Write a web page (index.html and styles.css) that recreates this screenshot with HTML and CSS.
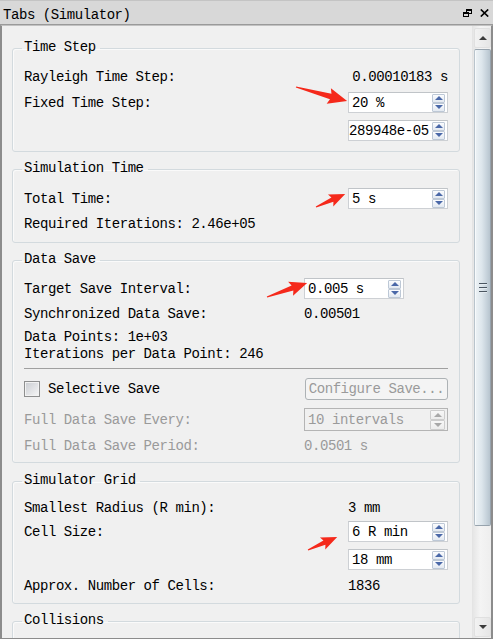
FILE: index.html
```html
<!DOCTYPE html>
<html>
<head>
<meta charset="utf-8">
<link rel="stylesheet" href="styles.css">
</head>
<body>
<div class="window">
  <div class="titlebar">
    <span class="title">Tabs (Simulator)</span>
    <div class="tb-icons">
      <svg class="tb-icon" width="9" height="8" viewBox="0 0 9 8">
        <rect x="3" y="0" width="6" height="2" fill="#000"/>
        <rect x="8" y="0" width="1" height="5" fill="#000"/>
        <rect x="6" y="4" width="3" height="1" fill="#000"/>
        <rect x="3" y="0" width="1" height="3" fill="#000"/>
        <rect x="0" y="3" width="6" height="2" fill="#000"/>
        <rect x="0" y="3" width="1" height="5" fill="#000"/>
        <rect x="5" y="3" width="1" height="5" fill="#000"/>
        <rect x="0" y="7" width="6" height="1" fill="#000"/>
      </svg>
      <svg class="tb-icon" width="9" height="8" viewBox="0 0 9 8">
        <path d="M0.8 0.5 L8.2 7.5 M8.2 0.5 L0.8 7.5" stroke="#000" stroke-width="1.7"/>
      </svg>
    </div>
  </div>
  <div class="body">
    <div class="scroll">
      <fieldset class="group g1">
        <legend>Time Step</legend>
        <div class="row r-text21">
          <span>Rayleigh Time Step:</span>
          <span class="val-right">0.00010183 s</span>
        </div>
        <div class="row mt5">
          <span>Fixed Time Step:</span>
          <div class="spin"><span class="spin-text">20 %</span><span class="spin-btns"><span class="spin-btn up"></span><span class="spin-btn down"></span></span></div>
        </div>
        <div class="row mt7">
          <span></span>
          <div class="spin"><span class="spin-text tight">289948e-05</span><span class="spin-btns"><span class="spin-btn up"></span><span class="spin-btn down"></span></span></div>
        </div>
      </fieldset>

      <fieldset class="group g2">
        <legend>Simulation Time</legend>
        <div class="row">
          <span>Total Time:</span>
          <div class="spin"><span class="spin-text">5 s</span><span class="spin-btns"><span class="spin-btn up"></span><span class="spin-btn down"></span></span></div>
        </div>
        <div class="line mt7">Required Iterations: 2.46e+05</div>
      </fieldset>

      <fieldset class="group g3">
        <legend>Data Save</legend>
        <div class="row wide">
          <span>Target Save Interval:</span>
          <div class="spin spin-short"><span class="spin-text">0.005 s</span><span class="spin-btns"><span class="spin-btn up"></span><span class="spin-btn down"></span></span></div>
        </div>
        <div class="row wide line mt7">
          <span>Synchronized Data Save:</span>
          <span>0.00501</span>
        </div>
        <div class="lines mt7">Data Points: 1e+03<br>Iterations per Data Point: 246</div>
        <div class="separator"></div>
        <div class="row wide r22">
          <label class="check"><span class="checkbox"></span><span>Selective Save</span></label>
          <span class="button disabled">Configure Save...</span>
        </div>
        <div class="row wide r23 mt8 disabled-text">
          <span>Full Data Save Every:</span>
          <div class="spin spin-disabled"><span class="spin-text">10 intervals</span><span class="spin-btns"><span class="spin-btn up"></span><span class="spin-btn down"></span></span></div>
        </div>
        <div class="row wide line mt7 disabled-text">
          <span>Full Data Save Period:</span>
          <span>0.0501 s</span>
        </div>
      </fieldset>

      <fieldset class="group g4">
        <legend>Simulator Grid</legend>
        <div class="row line">
          <span>Smallest Radius (R min):</span>
          <span>3 mm</span>
        </div>
        <div class="row mt5">
          <span>Cell Size:</span>
          <div class="spin"><span class="spin-text">6 R min</span><span class="spin-btns"><span class="spin-btn up"></span><span class="spin-btn down"></span></span></div>
        </div>
        <div class="row mt7">
          <span></span>
          <div class="spin"><span class="spin-text">18 mm</span><span class="spin-btns"><span class="spin-btn up"></span><span class="spin-btn down"></span></span></div>
        </div>
        <div class="row line mt8">
          <span>Approx. Number of Cells:</span>
          <span>1836</span>
        </div>
      </fieldset>

      <fieldset class="group g5">
        <legend>Collisions</legend>
        <div class="filler"></div>
      </fieldset>
    </div>
    <div class="scrollbar">
      <div class="sb-btn"><span class="sb-arrow up"></span></div>
      <div class="sb-thumb"><span class="grip"></span><span class="grip"></span><span class="grip"></span></div>
      <div class="sb-track"></div>
      <div class="sb-btn"><span class="sb-arrow down"></span></div>
    </div>
  </div>
  <svg class="annotations" width="493" height="639" viewBox="0 0 493 639">
    <g fill="#f5291b">
      <polygon transform="translate(296 87) rotate(15.35)" points="0,-0.6 36,-2.8 34,-8 53,0 34,8 36,2.8 0,0.6"/>
      <polygon transform="translate(316 207) rotate(-24.1)" points="0,-0.6 18,-2.4 16,-6.5 32,0 16,6.5 18,2.4 0,0.6"/>
      <polygon transform="translate(267 297) rotate(-19.3)" points="0,-0.6 27,-2.6 25,-7.5 42.5,0 25,7.5 27,2.6 0,0.6"/>
      <polygon transform="translate(308 550) rotate(-24.1)" points="0,-0.6 18,-2.4 16,-6.5 32,0 16,6.5 18,2.4 0,0.6"/>
    </g>
  </svg>
</div>
</body>
</html>
```

FILE: styles.css
```css
* { box-sizing: border-box; }

html, body {
  margin: 0;
  padding: 0;
  background: #f0f0f0;
}

body {
  font-family: "Liberation Mono", "DejaVu Sans Mono", monospace;
  font-size: 14px;
  letter-spacing: -0.43px;
  color: #000;
}

.window {
  position: relative;
  width: 493px;
  height: 639px;
  display: flex;
  flex-direction: column;
  background: #f0f0f0;
  overflow: hidden;
}

.titlebar {
  height: 25px;
  display: flex;
  align-items: center;
  padding: 4px 4px 0 3px;
  background: #d8d8d8;
  border-top: 1px solid #c4c4c4;
  border-bottom: 1px solid #9a9a9a;
  flex: none;
}

.title {
  white-space: nowrap;
}

.tb-icons {
  margin-left: auto;
  display: flex;
  gap: 8px;
  align-items: center;
  margin-top: -3px;
}

.tb-icon {
  display: block;
}

.body {
  flex: 1;
  display: flex;
  min-height: 0;
  border-left: 2px solid #8c8c8c;
  border-right: 2px solid #8c8c8c;
  border-bottom: 1px solid #8c8c8c;
  border-top: 1px solid #c2c2c2;
}

.scroll {
  flex: 1;
  min-width: 0;
  overflow: hidden;
  padding: 14px 12px 0 10px;
}

.group {
  margin: 0;
  min-width: 0;
  border: 1px solid #d3dade;
  border-radius: 3px;
  padding: 0 11px;
  box-shadow: inset 1px 1px 0 #fafafa;
}

.group legend {
  line-height: 14px;
  padding: 0 4px 3px 2px;
  margin-left: -2px;
  white-space: nowrap;
}

.g1 { padding-top: 9px; padding-bottom: 10px; }
.g2 { margin-top: 9px; padding-top: 10px; padding-bottom: 10px; }
.g3 { margin-top: 9px; padding-top: 9px; padding-bottom: 8px; }
.g4 { margin-top: 10px; padding-top: 10px; padding-bottom: 9px; }
.g5 { margin-top: 9px; }

.filler { height: 40px; }

.row {
  display: grid;
  grid-template-columns: 1fr 100px;
  align-items: center;
  height: 21px;
  white-space: nowrap;
}

.row.wide { grid-template-columns: 1fr 144px; }

.r-text21 { height: 21px; }
.r22 { height: 22px; }
.r23 { height: 23px; }

.line { height: 16px; line-height: 16px; }
.lines { line-height: 17px; white-space: nowrap; }

.mt5 { margin-top: 5px; }
.mt7 { margin-top: 7px; }
.mt8 { margin-top: 8px; }

.val-right { text-align: right; }

.spin {
  display: flex;
  align-items: center;
  height: 21px;
  border: 1px solid #cdd0d4;
  border-top-color: #c0c4c8;
  background: #fff;
  padding-right: 2px;
}

.spin-short { width: 100px; }

.r23 .spin { height: 23px; }

.spin-text {
  flex: 1;
  min-width: 0;
  padding-left: 3px;
  white-space: nowrap;
  overflow: hidden;
}

.spin-text.tight { padding-left: 0; }

.spin-btns {
  width: 13px;
  height: 18px;
  display: flex;
  flex-direction: column;
}

.spin-btn {
  flex: 1;
  display: flex;
  align-items: center;
  justify-content: center;
  border: 1px solid #bdc8d6;
  border-radius: 1px;
  background: linear-gradient(#fbfcfe, #e3e9f1);
}

.spin-btn.up::before {
  content: "";
  border-left: 4px solid transparent;
  border-right: 4px solid transparent;
  border-bottom: 4px solid #4a68a8;
}

.spin-btn.down::before {
  content: "";
  border-left: 4px solid transparent;
  border-right: 4px solid transparent;
  border-top: 4px solid #4a68a8;
}

.spin-disabled {
  background: #f0f0f0;
  border-color: #b4b4b4;
  color: #9a9a9a;
}

.spin-disabled .spin-btns {
  width: 15px;
  height: 20px;
}

.spin-disabled .spin-btn {
  border-color: #cdcdcd;
  background: linear-gradient(#f7f7f7, #ececec);
}

.spin-disabled .spin-btn.up::before { border-bottom-color: #a8a8a8; }
.spin-disabled .spin-btn.down::before { border-top-color: #a8a8a8; }

.disabled-text { color: #9a9a9a; }

.separator {
  height: 1px;
  background: #a0a0a0;
  margin-top: 5px;
  margin-bottom: 9px;
}

.check {
  display: flex;
  align-items: center;
  gap: 8px;
}

.checkbox {
  width: 16px;
  height: 16px;
  border: 1px solid #8e8f8f;
  background: linear-gradient(135deg, #c9ccd1, #f7f7f7);
  box-shadow: inset 0 0 0 1px #f2f2f2;
}

.button {
  height: 22px;
  display: flex;
  align-items: center;
  justify-content: center;
  border: 1px solid #adb2b5;
  border-radius: 3px;
  background: #f4f4f4;
  margin-left: 1px;
}

.button.disabled { color: #9a9a9a; }

.scrollbar {
  width: 19px;
  flex: none;
  display: flex;
  flex-direction: column;
  padding: 2px 0 1px 1px;
  background: linear-gradient(to right, #e6e6e6, #f4f4f4 40%, #eeeeee);
  border-left: 1px solid #e4e4e4;
}

.sb-btn {
  height: 20px;
  flex: none;
  display: flex;
  align-items: center;
  justify-content: center;
  border: 1px solid #e0e0e0;
  border-radius: 2px;
  background: linear-gradient(to right, #f2f2f2, #e6e6e6);
}

.sb-arrow.up {
  border-left: 4px solid transparent;
  border-right: 4px solid transparent;
  border-bottom: 4px solid #3c3c3c;
}

.sb-arrow.down {
  border-left: 4px solid transparent;
  border-right: 4px solid transparent;
  border-top: 4px solid #3c3c3c;
}

.sb-thumb {
  margin-top: 1px;
  height: 477px;
  flex: none;
  display: flex;
  flex-direction: column;
  align-items: center;
  justify-content: center;
  gap: 2px;
  border: 1px solid #97a3ad;
  border-left-color: #b9c4cc;
  border-radius: 2px;
  background: linear-gradient(to right, #eef3f6, #dde6ec 45%, #c5d1da 80%, #b7c4ce);
  box-shadow: inset 1px 0 0 #f7fafc;
}

.grip {
  width: 8px;
  height: 2px;
  background: #4b5661;
  border-bottom: 1px solid #e4ebf0;
}

.sb-track { flex: 1; }

.annotations {
  position: absolute;
  left: 0;
  top: 0;
  pointer-events: none;
}
```
